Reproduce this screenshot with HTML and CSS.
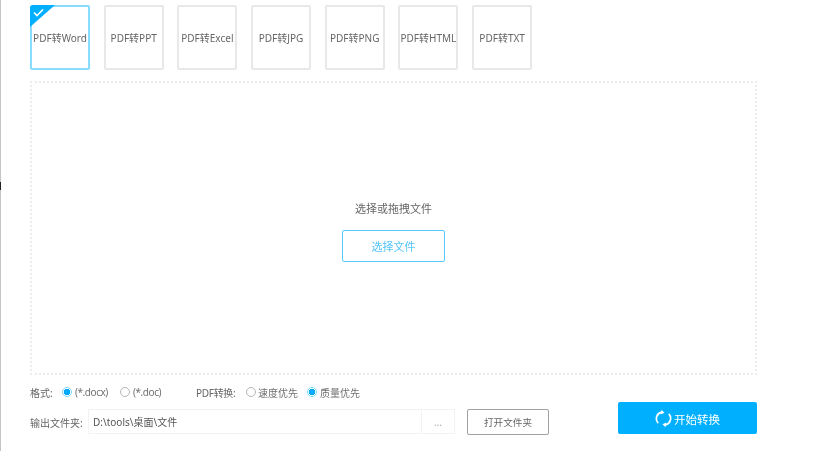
FILE: index.html
```html
<!DOCTYPE html>
<html lang="zh-CN">
<head>
<meta charset="utf-8">
<title>PDF转换</title>
<link rel="stylesheet" href="styles.css">
</head>
<body>
<div class="app">
  <span class="tick"></span>
  <div class="tabs">
    <div class="tab active">
      <svg class="corner" width="26" height="23" viewBox="0 0 26 23"><path d="M2 0H25L0 22V2Z" fill="#00b0ff"/><path d="M4 7.5L7 10.5L13 4.5" fill="none" stroke="#fff" stroke-width="1.6"/></svg>
      PDF转Word
    </div>
    <div class="tab">PDF转PPT</div>
    <div class="tab">PDF转Excel</div>
    <div class="tab">PDF转JPG</div>
    <div class="tab">PDF转PNG</div>
    <div class="tab">PDF转HTML</div>
    <div class="tab">PDF转TXT</div>
  </div>
  <div class="drop">
    <div class="drop-text">选择或拖拽文件</div>
    <div class="choose">选择文件</div>
  </div>
  <div class="footer">
    <div class="options">
      <div class="row-radio">
        <span class="label format-label">格式:</span>
        <span class="radio on"></span><span class="opt docx">(*.docx)</span>
        <span class="radio"></span><span class="opt doc">(*.doc)</span>
        <span class="label convert-label">PDF转换:</span>
        <span class="radio"></span><span class="opt speed">速度优先</span>
        <span class="radio on"></span><span class="opt quality">质量优先</span>
      </div>
      <div class="row-path">
        <span class="label path-label">输出文件夹:</span>
        <div class="path">
          <span class="path-value">D:\tools\桌面\文件</span>
          <span class="browse">...</span>
        </div>
        <div class="open">打开文件夹</div>
      </div>
    </div>
    <div class="start">
      <svg width="17" height="17" viewBox="0 0 17 17"><path d="M3.2 13.2A6.7 6.7 0 0 1 6.5 2.1" fill="none" stroke="#fff" stroke-width="1.7"/><path d="M6.2 0L9.6 2.4L5.9 4.6Z" fill="#fff" transform="rotate(8 7 2)"/><path d="M13.8 3.8A6.7 6.7 0 0 1 10.5 14.9" fill="none" stroke="#fff" stroke-width="1.7"/><path d="M10.8 17L7.4 14.6L11.1 12.4Z" fill="#fff" transform="rotate(8 10 15)"/></svg>
      <span class="start-text">开始转换</span>
    </div>
  </div>
</div>
</body>
</html>
```
FILE: styles.css
```css
* { box-sizing: border-box; }
html, body { margin: 0; padding: 0; background: #fff; }
body {
  font-family: "Noto Sans", "Noto Sans CJK SC", sans-serif;
  font-size: 10px;
  color: #666;
  overflow: hidden;
}
.app {
  position: relative;
  width: 817px;
  height: 451px;
  border-left: 1px solid #c4c4c4;
  padding: 5px 0 0 29px;
  filter: blur(0.45px);
}
.tick {
  position: absolute;
  left: -1px;
  top: 182px;
  width: 1px;
  height: 8px;
  background: #222;
}
.tabs { display: flex; gap: 13.7px; }
.tab {
  position: relative;
  width: 60px;
  height: 65px;
  border: 2px solid #e8e8e8;
  border-radius: 2px;
  display: flex;
  align-items: center;
  justify-content: center;
  white-space: nowrap;
  font-size: 10px;
  color: #666;
}
.tab.active { border-color: #8adcff; }
.corner { position: absolute; left: -2px; top: -2px; }
.drop {
  width: 727px;
  height: 294px;
  margin-top: 11px;
  border: 2px dotted #ececec;
  display: flex;
  flex-direction: column;
  align-items: center;
  padding-top: 118px;
}
.drop-text { font-size: 11px; line-height: 16px; color: #666; }
.choose {
  width: 103px;
  height: 32px;
  margin-top: 13px;
  border: 1px solid #55c9ff;
  border-radius: 2px;
  color: #55c4f8;
  font-size: 11px;
  display: flex;
  align-items: center;
  justify-content: center;
}
.footer {
  width: 727px;
  margin-top: 8px;
  display: flex;
  justify-content: space-between;
  align-items: flex-end;
}
.options { display: flex; flex-direction: column; }
.row-radio { display: flex; align-items: center; height: 18px; white-space: nowrap; }
.label { color: #666; }
.format-label { width: 32px; flex: none; }
.convert-label { width: 50px; flex: none; letter-spacing: -0.3px; }
.radio {
  width: 10px;
  height: 10px;
  border-radius: 50%;
  border: 1px solid #b5b5b5;
  background: #fff;
  flex: none;
}
.radio.on {
  border-color: #7dd6ff;
  background: radial-gradient(circle, #00a8ff 0 3px, #fff 3.4px);
}
.opt { color: #707070; margin-left: 3px; flex: none; }
.docx { width: 45px; letter-spacing: -0.45px; }
.doc { width: 63px; letter-spacing: -0.45px; }
.speed { width: 49px; margin-left: 2px; }
.quality { width: 40px; }
.row-path { display: flex; align-items: center; margin-top: 8px; height: 26px; }
.path-label { width: 58px; flex: none; }
.path {
  width: 367px;
  height: 25px;
  margin-bottom: 1px;
  border: 1px solid #f3f3f3;
  display: flex;
  align-items: center;
  justify-content: space-between;
  padding-left: 4px;
  color: #555;
}
.browse {
  width: 33px;
  height: 100%;
  border-left: 1px solid #f3f3f3;
  color: #aaa;
  display: flex;
  align-items: center;
  justify-content: center;
}
.open {
  width: 82px;
  height: 26px;
  margin-left: 12px;
  border: 1px solid #a0a0a0;
  border-radius: 2px;
  display: flex;
  align-items: center;
  justify-content: center;
  font-size: 9.6px;
  color: #666;
}
.start {
  width: 139px;
  height: 32px;
  background: #00b0ff;
  border-radius: 2px;
  color: #fff;
  font-size: 11.5px;
  display: flex;
  align-items: center;
  justify-content: center;
  gap: 2px;
  margin-bottom: 1px;
}
.start-text { padding-top: 1px; }
```
